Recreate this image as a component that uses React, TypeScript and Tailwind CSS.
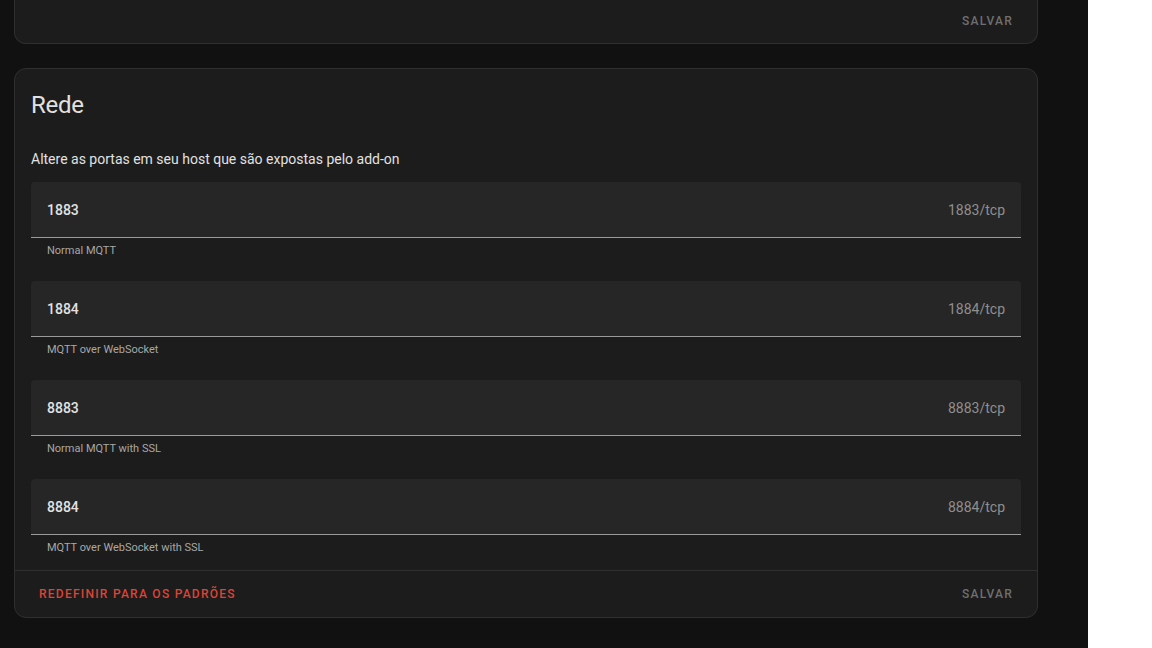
import React from "react";

const ports = [
  { value: "1883", suffix: "1883/tcp", helper: "Normal MQTT" },
  { value: "1884", suffix: "1884/tcp", helper: "MQTT over WebSocket" },
  { value: "8883", suffix: "8883/tcp", helper: "Normal MQTT with SSL" },
  { value: "8884", suffix: "8884/tcp", helper: "MQTT over WebSocket with SSL" },
];

function Field({ value, suffix, helper }: { value: string; suffix: string; helper: string }) {
  return (
    <div className="flex flex-col">
      <div className="flex h-[56px] items-center justify-between rounded-t-[4px] border-b border-[#9a9a9a] bg-[#262626] px-4 pt-[2px]">
        <span className="text-[14px] font-medium text-[#e1e1e1]">{value}</span>
        <span className="text-[14px] text-[#8f8f8f]">{suffix}</span>
      </div>
      <div className="h-[43px] px-4 pt-[5px] text-[11px] leading-[16px] text-[#a8a8a8]">{helper}</div>
    </div>
  );
}

function ActionButton({ label, red }: { label: string; red?: boolean }) {
  return (
    <button
      className={
        "h-[36px] px-2 text-[12px] font-medium uppercase tracking-[1.25px] " +
        (red ? "text-[#db4437]" : "text-[#6f6f6f]")
      }
    >
      {label}
    </button>
  );
}

export default function App() {
  return (
    <div className="flex h-[648px] w-[1152px] bg-white" style={{ fontFamily: "Roboto, 'Noto Sans', sans-serif" }}>
      <div className="flex w-[1088px] flex-col gap-[24px] overflow-hidden bg-[#111111] pl-[14px] pr-[50px]">
        <div className="flex h-[44px] items-center justify-end rounded-b-[12px] border-x border-b border-[#2f2f2f] bg-[#1c1c1c] px-4 pb-[2px]">
          <ActionButton label="Salvar" />
        </div>
        <div className="flex flex-col rounded-[12px] border border-[#2f2f2f] bg-[#1c1c1c]">
          <div className="px-4 pt-[12px] text-[24px] leading-[48px] tracking-[-0.012em] text-[#e1e1e1]">Rede</div>
          <div className="px-4 pt-[20px] text-[14px] leading-[20px] text-[#e1e1e1]">
            Altere as portas em seu host que são expostas pelo add-on
          </div>
          <div className="flex flex-col px-4 pt-[13px]">
            {ports.map((p) => (
              <Field key={p.value} {...p} />
            ))}
          </div>
          <div className="-mt-[8px] flex h-[47px] items-center justify-between border-t border-[#2f2f2f] px-4">
            <ActionButton label="Redefinir para os padrões" red />
            <ActionButton label="Salvar" />
          </div>
        </div>
      </div>
    </div>
  );
}
